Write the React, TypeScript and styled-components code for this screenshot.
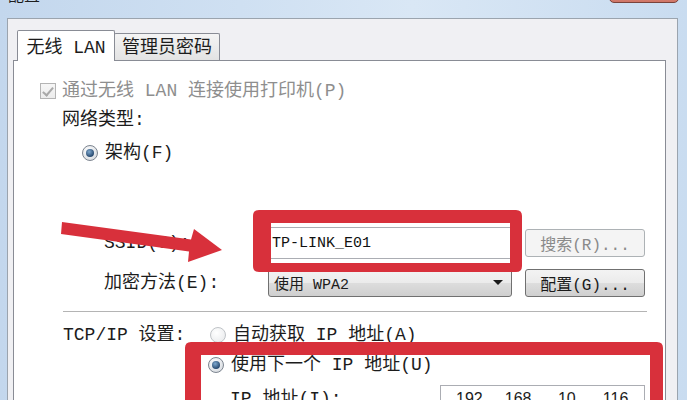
import React from "react";
import styled, { createGlobalStyle, css } from "styled-components";

const GlobalStyle = createGlobalStyle`
  html, body { margin: 0; padding: 0; width: 687px; height: 400px; overflow: hidden; }
  body { font-family: "Liberation Mono", "Noto Sans CJK SC", monospace; color: #1c1c1c; }
  * { box-sizing: border-box; }
`;

const Window = styled.div`
  position: relative;
  width: 687px;
  height: 400px;
  overflow: hidden;
  display: flex;
  flex-direction: column;
  padding: 0 9px 0 7px;
  background: linear-gradient(90deg, #c3d7ed 0%, #cfe0f2 35%, #d9e7f5 60%, #c9dcf0 100%);
`;

const TitleBar = styled.div`
  height: 18px;
  flex-shrink: 0;
  display: flex;
  justify-content: space-between;
  align-items: flex-start;
`;

const Title = styled.div`
  font-size: 16px;
  line-height: 16px;
  margin-top: -11px;
  margin-left: 1px;
  color: #1e1e1e;
`;

const CloseButton = styled.div`
  width: 70px;
  height: 20px;
  margin-top: -17px;
  margin-right: -1px;
  border: 1px solid #7a433b;
  border-radius: 0 0 5px 5px;
  background: linear-gradient(#e9a898, #cf7566);
`;

const Dialog = styled.div`
  flex: 1;
  display: flex;
  flex-direction: column;
  border: 1px solid #9ba4ae;
  border-bottom: none;
  background: #f0f0f3;
  padding: 11px 11px 0 5px;
`;

const TabStrip = styled.div`
  position: relative;
  z-index: 1;
  height: 31px;
  margin-bottom: -1px;
  padding-left: 4px;
  display: flex;
  align-items: flex-end;
  flex-shrink: 0;
`;

const Tab = styled.div<{ $active?: boolean; $w: number }>`
  width: ${(p) => p.$w}px;
  display: flex;
  align-items: center;
  justify-content: center;
  font-size: 18px;
  line-height: 20px;
  border: 1px solid #898c95;
  border-bottom: none;
  border-radius: 2px 2px 0 0;
  ${(p) =>
    p.$active
      ? css`
          height: 31px;
          background: #ffffff;
          padding-top: 3px;
        `
      : css`
          height: 27px;
          margin-bottom: 1px;
          margin-left: -1px;
          padding-top: 2px;
          background: linear-gradient(#f4f4f4, #e3e3e3);
        `}
`;

const Panel = styled.div`
  flex: 1;
  display: flex;
  flex-direction: column;
  background: #ffffff;
  border: 1px solid #898c95;
  border-bottom: none;
  padding: 20px 0 0 26px;
`;

const CheckRow = styled.div`
  display: flex;
  align-items: center;
  gap: 6px;
  height: 20px;
  font-size: 18px;
  line-height: 20px;
  color: #8e8e8e;
`;

const CheckBox = styled.div`
  position: relative;
  width: 16px;
  height: 16px;
  border: 1px solid #b4b4b4;
  background: linear-gradient(#f6f6f6, #ececec);
  &::after {
    content: "";
    position: absolute;
    left: 4px;
    top: 1px;
    width: 4px;
    height: 9px;
    border-right: 2px solid #a9a9a9;
    border-bottom: 2px solid #a9a9a9;
    transform: rotate(40deg);
  }
`;

const SectionLabel = styled.div`
  margin-left: 22px;
  margin-top: 9px;
  height: 20px;
  font-size: 18px;
  line-height: 20px;
`;

const OptionRow = styled.div<{ $indent: number; $top: number; $h?: number }>`
  display: flex;
  align-items: center;
  gap: 7px;
  margin-left: ${(p) => p.$indent}px;
  margin-top: ${(p) => p.$top}px;
  height: ${(p) => p.$h ?? 20}px;
  font-size: 18px;
  line-height: 20px;
  white-space: nowrap;
`;

const Radio = styled.div<{ $checked?: boolean }>`
  position: relative;
  flex-shrink: 0;
  width: 16px;
  height: 16px;
  border-radius: 50%;
  border: 1px solid ${(p) => (p.$checked ? "#7d8590" : "#bfc3c7")};
  background: radial-gradient(circle at 40% 35%, #ffffff, ${(p) => (p.$checked ? "#cfd4da" : "#e6e8ea")});
  ${(p) =>
    p.$checked &&
    css`
      &::after {
        content: "";
        position: absolute;
        left: 3px;
        top: 3px;
        width: 8px;
        height: 8px;
        border-radius: 50%;
        background: radial-gradient(circle at 40% 35%, #7fa9cf, #284a70 70%);
      }
    `}
`;

const FormGrid = styled.div`
  display: grid;
  grid-template-columns: 151px 244px 120px;
  grid-template-rows: 32px 29px;
  column-gap: 13px;
  row-gap: 9px;
  align-items: center;
  margin-left: 64px;
  margin-top: 64px;
`;

const FieldLabel = styled.div`
  font-size: 18px;
  line-height: 20px;
  white-space: nowrap;
`;

const TextBox = styled.div`
  height: 32px;
  display: flex;
  align-items: center;
  padding-left: 3px;
  background: #ffffff;
  border: 1px solid #abadb3;
  font-size: 15px;
  color: #111;
`;

const Combo = styled.div`
  height: 29px;
  display: flex;
  align-items: center;
  justify-content: space-between;
  padding: 0 8px 0 5px;
  border: 1px solid #707070;
  border-radius: 3px;
  background: linear-gradient(#f3f3f3 0%, #ebebeb 50%, #dddddd 51%, #cfcfcf 100%);
  font-size: 15px;
`;

const Caret = styled.div`
  width: 0;
  height: 0;
  border-left: 5px solid transparent;
  border-right: 5px solid transparent;
  border-top: 5px solid #1a1a1a;
`;

const Button = styled.div<{ $disabled?: boolean }>`
  height: 28px;
  display: flex;
  align-items: center;
  justify-content: center;
  font-size: 16px;
  border-radius: 3px;
  white-space: nowrap;
  ${(p) =>
    p.$disabled
      ? css`
          color: #8a8a8a;
          border: 1px solid #adb2b5;
          background: #f4f4f4;
        `
      : css`
          color: #1a1a1a;
          border: 1px solid #707070;
          background: linear-gradient(#f3f3f3 0%, #ebebeb 50%, #dddddd 51%, #cfcfcf 100%);
        `}
`;

const Separator = styled.div`
  margin-left: 23px;
  margin-top: 14px;
  width: 584px;
  height: 1px;
  background: #b4b4b4;
`;

const TcpSection = styled.div`
  display: flex;
  margin-left: 23px;
  margin-top: 11px;
`;

const TcpLabel = styled.div`
  width: 145px;
  height: 24px;
  font-size: 18px;
  line-height: 24px;
  white-space: nowrap;
`;

const OptionsColumn = styled.div`
  display: flex;
  flex-direction: column;
`;

const IpRow = styled.div`
  display: flex;
  align-items: center;
  margin-left: 22px;
  margin-top: 10px;
`;

const IpLabel = styled.div`
  width: 210px;
  font-size: 18px;
  line-height: 20px;
`;

const IpBox = styled.div`
  width: 205px;
  height: 28px;
  display: grid;
  grid-template-columns: 1fr 8px 1fr 8px 1fr 8px 1fr;
  align-items: center;
  padding: 0 8px;
  border: 1px solid #abadb3;
  background: #fff;
  font-family: "Liberation Sans", "Noto Sans CJK SC", sans-serif;
  font-size: 16px;
  text-align: center;
`;

const Overlay = styled.svg`
  position: absolute;
  left: 0;
  top: 0;
  width: 687px;
  height: 400px;
  pointer-events: none;
`;

const RED = "#d8303b";

export default function App() {
  return (
    <>
      <GlobalStyle />
      <Window>
        <TitleBar>
          <Title>配置</Title>
          <CloseButton />
        </TitleBar>
        <Dialog>
          <TabStrip>
            <Tab $active $w={98}>无线 LAN</Tab>
            <Tab $w={106}>管理员密码</Tab>
          </TabStrip>
          <Panel>
            <CheckRow>
              <CheckBox />
              <span>通过无线 LAN 连接使用打印机(P)</span>
            </CheckRow>
            <SectionLabel>网络类型:</SectionLabel>
            <OptionRow $indent={42} $top={13}>
              <Radio $checked />
              <span>架构(F)</span>
            </OptionRow>
            <FormGrid>
              <FieldLabel>SSID(S):</FieldLabel>
              <TextBox>TP-LINK_E01</TextBox>
              <Button $disabled>搜索(R)...</Button>
              <FieldLabel>加密方法(E):</FieldLabel>
              <Combo>
                <span>使用 WPA2</span>
                <Caret />
              </Combo>
              <Button>配置(G)...</Button>
            </FormGrid>
            <Separator />
            <TcpSection>
              <TcpLabel>TCP/IP 设置:</TcpLabel>
              <OptionsColumn>
                <OptionRow $indent={2} $top={0} $h={24}>
                  <Radio />
                  <span>自动获取 IP 地址(A)</span>
                </OptionRow>
                <OptionRow $indent={0} $top={8}>
                  <Radio $checked />
                  <span>使用下一个 IP 地址(U)</span>
                </OptionRow>
                <IpRow>
                  <IpLabel>IP 地址(I):</IpLabel>
                  <IpBox>
                    <span>192</span>
                    <span>.</span>
                    <span>168</span>
                    <span>.</span>
                    <span>10</span>
                    <span>.</span>
                    <span>116</span>
                  </IpBox>
                </IpRow>
              </OptionsColumn>
            </TcpSection>
          </Panel>
        </Dialog>
        <Overlay viewBox="0 0 687 400">
          <path
            fillRule="evenodd"
            fill={RED}
            d="M259 210 H516 Q522 210 522 216 V266 Q522 272 516 272 H259 Q253 272 253 266 V216 Q253 210 259 210 Z M271 223 V263 H510 V223 Z"
          />
          <path
            fillRule="evenodd"
            fill={RED}
            d="M191 342 H657 Q663 342 663 348 V420 H185 V348 Q185 342 191 342 Z M201 355 V420 H650 V355 Z"
          />
          <polygon
            fill={RED}
            points="62,222 191,239.5 194,229 222,250 188,262 189,251.5 61,234"
          />
        </Overlay>
      </Window>
    </>
  );
}
